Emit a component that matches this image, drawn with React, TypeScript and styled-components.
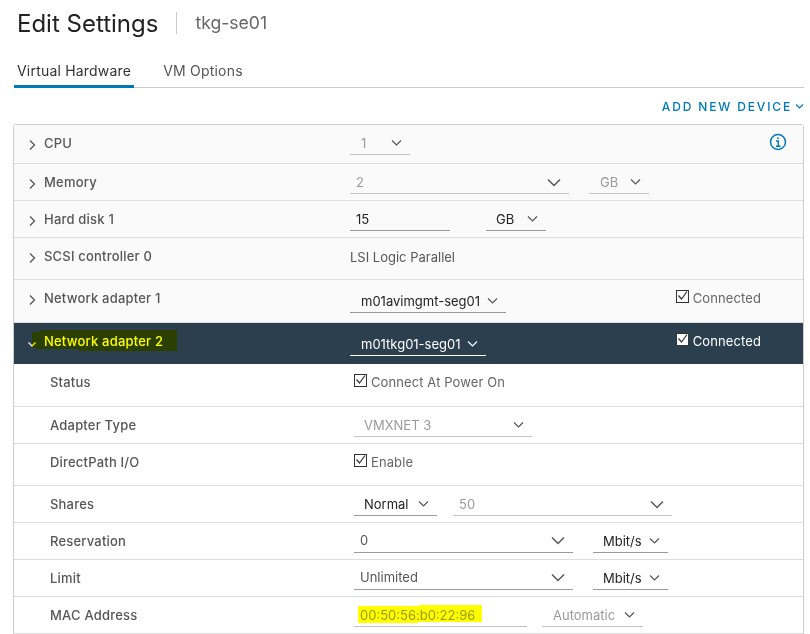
import styled, { createGlobalStyle } from 'styled-components'

const GlobalStyle = createGlobalStyle`
	html, body {
		margin: 0;
		background: #fff;
	}
	body {
		font-family: 'Inter', 'Liberation Sans', sans-serif;
		-webkit-font-smoothing: antialiased;
	}
`

const Page = styled.div`
	width: 810px;
	height: 634px;
	box-sizing: border-box;
	padding: 0 6px 0 13px;
	overflow: hidden;
`

const Header = styled.header`
	display: flex;
	align-items: center;
	height: 46px;
	padding-left: 4px;
`

const Title = styled.h1`
	margin: 0;
	font-size: 24px;
	font-weight: 400;
	color: #222;
`

const Subtitle = styled.span`
	margin-left: 18px;
	padding-left: 18px;
	border-left: 1px solid #ccc;
	height: 22px;
	line-height: 22px;
	font-size: 17.6px;
	color: #666;
`

const Tabs = styled.nav`
	display: flex;
	height: 42px;
	box-sizing: border-box;
	margin-left: 1px;
	border-bottom: 1px solid #ccc;
`

const Tab = styled.div<{ $active?: boolean }>`
	height: 42px;
	box-sizing: border-box;
	padding: 15px 3px 0;
	margin-right: ${p => (p.$active ? '26px' : '0')};
	font-size: 14px;
	line-height: 20px;
	letter-spacing: 0.2px;
	color: ${p => (p.$active ? '#333' : '#565656')};
	border-bottom: 3px solid ${p => (p.$active ? '#0079b8' : 'transparent')};
`

const Toolbar = styled.div`
	display: flex;
	justify-content: flex-end;
	align-items: center;
	gap: 3px;
	height: 36px;
	color: #0079b8;
	font-size: 12px;
	font-weight: 500;
	letter-spacing: 1.85px;
`

const Panel = styled.section`
	width: 791px;
	box-sizing: border-box;
	border: 1px solid #ccc;
	border-radius: 3px 3px 0 0;
`

const Row = styled.div<{ $h: number; $tone?: 'collapsed' | 'open' | 'plain' }>`
	display: flex;
	height: ${p => p.$h}px;
	box-sizing: border-box;
	border-bottom: 1px solid ${p => (p.$tone === 'open' ? '#2b3f4e' : '#ddd')};
	background: ${p =>
		p.$tone === 'open' ? '#2b3f4e' : p.$tone === 'plain' ? '#fff' : '#fafafa'};
`

const Label = styled.div<{ $sub?: boolean; $open?: boolean }>`
	position: relative;
	display: flex;
	align-items: center;
	gap: 7px;
	width: ${p => (p.$sub ? '340px' : '336px')};
	height: 36px;
	flex: none;
	box-sizing: border-box;
	padding-left: ${p => (p.$sub ? '36px' : '13px')};
	font-size: 13px;
	font-weight: 500;
	letter-spacing: 0.2px;
	color: ${p => (p.$open ? '#ffff00' : '#565656')};
`

const Values = styled.div<{ $gap?: number }>`
	display: flex;
	flex: 1;
	align-items: flex-start;
	gap: ${p => p.$gap ?? 0}px;
`

const Dropdown = styled.div<{
	$w: number
	$pad?: number
	$dim?: boolean
	$drop?: boolean
	$light?: boolean
	$soft?: boolean
}>`
	display: flex;
	align-items: center;
	width: ${p => p.$w}px;
	height: 30px;
	flex: none;
	box-sizing: border-box;
	margin-top: ${p => (p.$drop ? '3px' : '0')};
	padding: ${p => (p.$soft ? '6px 8px 1px' : '7px 8px 0')};
	padding-left: ${p => p.$pad ?? 6}px;
	font-size: 13px;
	color: ${p =>
		p.$light ? '#fff' : p.$dim ? '#9a9a9a' : p.$soft ? '#565656' : '#222'};
	border-bottom: 1px solid
		${p => (p.$light ? '#fff' : p.$dim ? '#c4c4c4' : '#9a9a9a')};

	svg {
		margin-left: auto;
	}
`

const Plain = styled.div`
	height: 36px;
	line-height: 38px;
	font-size: 13px;
	color: #565656;
`

const Check = styled.label<{ $light?: boolean; $right?: boolean }>`
	display: flex;
	align-items: center;
	gap: 4px;
	height: 36px;
	margin: ${p => (p.$right ? '0 42px 0 auto' : '0')};
	font-size: 13px;
	letter-spacing: 0.1px;
	color: ${p => (p.$light ? '#fff' : '#666')};
`

const Box = styled.span<{ $light?: boolean }>`
	display: block;
	width: 13px;
	height: 13px;
	box-sizing: border-box;
	border: 1px solid #333;
	margin-top: -3px;
	background: ${p => (p.$light ? '#fff' : 'transparent')};

	svg {
		display: block;
	}
`

const Info = styled.svg`
	display: block;
	margin: 8px 16px 0 auto;
`

const Marker = styled.svg`
	position: absolute;
	mix-blend-mode: multiply;
	pointer-events: none;
`

const MacValue = styled.span`
	position: relative;
`

const Chevron = ({ w = 9, color = '#565656' }: { w?: number; color?: string }) => (
	<svg width={w + 2} height={w / 2 + 3} viewBox={`0 0 ${w + 2} ${w / 2 + 3}`} fill='none'>
		<polyline
			points={`1,1.5 ${w / 2 + 1},${w / 2 + 1.5} ${w + 1},1.5`}
			stroke={color}
			strokeWidth={w > 10 ? 1.5 : 1.2}
		/>
	</svg>
)

const Expand = ({ open }: { open?: boolean }) => (
	<svg width='10' height='12' viewBox='0 0 10 12' fill='none' style={{ marginTop: 3 }}>
		<polyline
			points={open ? '1.5,5.5 5,9 8.5,5.5' : '3,1.5 7.5,6 3,10.5'}
			stroke={open ? '#f0f0f0' : '#565656'}
			strokeWidth='1.3'
		/>
	</svg>
)

const Tick = ({ light }: { light?: boolean }) => (
	<Box $light={light}>
		<svg width='11' height='11' viewBox='0 0 11 11' fill='none'>
			<polyline points='1.5,4.5 4.5,8 10,0.5' stroke='#333' strokeWidth='1.2' />
		</svg>
	</Box>
)

const App = () => {
	return (
		<Page>
			<GlobalStyle />
			<Header>
				<Title>Edit Settings</Title>
				<Subtitle>tkg-se01</Subtitle>
			</Header>
			<Tabs>
				<Tab $active>Virtual Hardware</Tab>
				<Tab>VM Options</Tab>
			</Tabs>
			<Toolbar>
				ADD NEW DEVICE
				<Chevron w={7} color='#0079b8' />
			</Toolbar>
			<Panel>
				<Row $h={39}>
					<Label>
						<Expand />
						CPU
					</Label>
					<Values>
						<Dropdown $w={60} $pad={11} $dim>
							1
							<Chevron />
						</Dropdown>
						<Info width='18' height='18' viewBox='0 0 18 18' fill='none' stroke='#0079b8'>
							<circle cx='9' cy='9' r='7.5' strokeWidth='1.5' />
							<circle cx='9' cy='5.2' r='0.9' fill='#0079b8' stroke='none' />
							<path d='M7 8h2.3v5M7 13.2h4.6' strokeWidth='1.4' />
						</Info>
					</Values>
				</Row>
				<Row $h={37}>
					<Label>
						<Expand />
						Memory
					</Label>
					<Values $gap={20}>
						<Dropdown $w={219} $dim>
							2
							<Chevron w={12} />
						</Dropdown>
						<Dropdown $w={60} $pad={11} $dim>
							GB
							<Chevron />
						</Dropdown>
					</Values>
				</Row>
				<Row $h={37}>
					<Label>
						<Expand />
						Hard disk 1
					</Label>
					<Values $gap={36}>
						<Dropdown $w={100}>15</Dropdown>
						<Dropdown $w={60} $pad={10}>
							GB
							<Chevron />
						</Dropdown>
					</Values>
				</Row>
				<Row $h={42}>
					<Label>
						<Expand />
						SCSI controller 0
					</Label>
					<Values>
						<Plain>LSI Logic Parallel</Plain>
					</Values>
				</Row>
				<Row $h={43}>
					<Label>
						<Expand />
						Network adapter 1
					</Label>
					<Values>
						<Dropdown $w={156} $pad={11} $drop>
							m01avimgmt-seg01
							<Chevron />
						</Dropdown>
						<Check $right>
							<Tick />
							Connected
						</Check>
					</Values>
				</Row>
				<Row $h={41} $tone='open'>
					<Label $open>
						<Expand open />
						Network adapter 2
						<Marker width='150' height='24' viewBox='0 0 150 24' style={{ left: 16, top: 6 }}>
							<path d='M2 3h8V1h137v21H50l-2-2H8l-6-2z' fill='#ffff00' />
						</Marker>
					</Label>
					<Values>
						<Dropdown $w={136} $pad={11} $drop $light>
							m01tkg01-seg01
							<Chevron color='#fff' />
						</Dropdown>
						<Check $right $light>
							<Tick light />
							Connected
						</Check>
					</Values>
				</Row>
				<Row $h={43} $tone='plain'>
					<Label $sub>Status</Label>
					<Values>
						<Check>
							<Tick />
							Connect At Power On
						</Check>
					</Values>
				</Row>
				<Row $h={37} $tone='plain'>
					<Label $sub>Adapter Type</Label>
					<Values>
						<Dropdown $w={178} $pad={10} $dim>
							VMXNET 3
							<Chevron />
						</Dropdown>
					</Values>
				</Row>
				<Row $h={42} $tone='plain'>
					<Label $sub>DirectPath I/O</Label>
					<Values>
						<Check>
							<Tick />
							Enable
						</Check>
					</Values>
				</Row>
				<Row $h={37} $tone='plain'>
					<Label $sub>Shares</Label>
					<Values $gap={16}>
						<Dropdown $w={83} $pad={10}>
							Normal
							<Chevron />
						</Dropdown>
						<Dropdown $w={219} $dim>
							50
							<Chevron w={12} />
						</Dropdown>
					</Values>
				</Row>
				<Row $h={37} $tone='plain'>
					<Label $sub>Reservation</Label>
					<Values $gap={20}>
						<Dropdown $w={219} $soft>
							0
							<Chevron w={12} />
						</Dropdown>
						<Dropdown $w={75} $pad={10}>
							Mbit/s
							<Chevron />
						</Dropdown>
					</Values>
				</Row>
				<Row $h={37} $tone='plain'>
					<Label $sub>Limit</Label>
					<Values $gap={20}>
						<Dropdown $w={219} $soft>
							Unlimited
							<Chevron w={12} />
						</Dropdown>
						<Dropdown $w={75} $pad={10}>
							Mbit/s
							<Chevron />
						</Dropdown>
					</Values>
				</Row>
				<Row $h={37} $tone='plain'>
					<Label $sub>MAC Address</Label>
					<Values $gap={15}>
						<Dropdown $w={173} $dim>
							<MacValue>
								00:50:56:b0:22:96
								<Marker width='126' height='22' viewBox='0 0 126 22' style={{ left: -2, top: -3 }}>
									<path d='M0 2h60l1-1h63v17H60v1H0z' fill='#ffff00' />
								</Marker>
							</MacValue>
						</Dropdown>
						<Dropdown $w={101} $pad={11} $dim>
							Automatic
							<Chevron />
						</Dropdown>
					</Values>
				</Row>
			</Panel>
		</Page>
	)
}

export default App
